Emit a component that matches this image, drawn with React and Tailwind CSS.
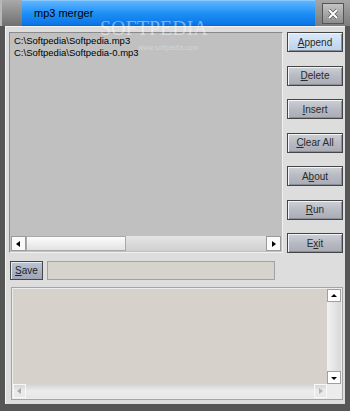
import React from 'react';

const font = { fontFamily: '"Liberation Sans", Arial, sans-serif' };

const Btn = ({ label, u, active }) => {
  const i = label.indexOf(u);
  return (
    <div
      className={`w-[56px] h-[20px] border border-[#454545] flex items-center justify-center text-[10px] text-[#2a2a2a] shadow-[inset_1px_1px_0_#f2f4f8,inset_-1px_-1px_0_#8a8e96] ${
        active ? 'bg-gradient-to-b from-[#dbe9f8] to-[#b9d2ee]' : 'bg-gradient-to-b from-[#cdd0d6] via-[#b7bac2] to-[#a9acb4]'
      }`}
    >
      <span>
        {label.slice(0, i)}
        <span className="underline underline-offset-1">{u}</span>
        {label.slice(i + 1)}
      </span>
    </div>
  );
};

const Tri = ({ dir, color = '#000' }) => {
  const pts = {
    left: '5,1 5,7 1,4',
    right: '2,1 2,7 6,4',
    up: '1,5 7,5 4,2',
    down: '1,3 7,3 4,6',
  }[dir];
  return (
    <svg width="8" height="8" viewBox="0 0 8 8">
      <polygon points={pts} fill={color} />
    </svg>
  );
};

export default function App() {
  return (
    <div className="relative w-[350px] h-[411px] bg-[#565656] overflow-hidden" style={font}>
      {/* title bar */}
      <div className="flex h-[26px]">
        <div className="w-[22px] bg-gradient-to-b from-[#a9a9a9] via-[#8c8c8c] to-[#707070] border-l-2 border-[#b8b8b8]" />
        <div className="w-[293px] h-[25px] bg-gradient-to-b from-[#5cb6ff] via-[#1e90f6] to-[#0c74e6] border-t border-[#8ccaff] flex items-center pl-[12px]">
          <span className="text-[11px] text-black">mp3 merger</span>
        </div>
        <div className="flex-1 bg-gradient-to-b from-[#a6a6a6] to-[#7c7c7c] flex items-start pl-[7px] pt-[3px]">
          <div className="w-[22px] h-[21px] border border-[#555] bg-gradient-to-b from-[#c4c4c4] to-[#8e8e8e] flex items-center justify-center">
            <svg width="12" height="12" viewBox="0 0 12 12">
              <path d="M2 2 L10 10 M10 2 L2 10" stroke="#5a5a5a" strokeWidth="3.4" />
              <path d="M2 2 L10 10 M10 2 L2 10" stroke="#fff" strokeWidth="2" />
            </svg>
          </div>
        </div>
      </div>

      {/* client */}
      <div className="mx-[5px] h-[378px] bg-[#dddddd] border-t border-l border-[#f4f4f4] flex flex-col pt-[5px] pl-[3px]">
        <div className="flex">
          <div className="w-[274px] h-[221px] bg-[#c0c0c0] border border-t-[#8a8a8a] border-l-[#8a8a8a] border-b-[#f0f0f0] border-r-[#f0f0f0] flex flex-col">
            <div className="flex-1 pl-[4px] pt-[2px] text-[9.5px] leading-[11.5px] text-black">
              <div>C:\Softpedia\Softpedia.mp3</div>
              <div>C:\Softpedia\Softpedia-0.mp3</div>
            </div>
            <div className="h-[15px] mx-[1px] mb-[1px] flex bg-[#d6d6d6]">
              <div className="w-[15px] bg-[#fafafa] border border-[#9a9a9a] flex items-center justify-center">
                <Tri dir="left" />
              </div>
              <div className="w-[100px] bg-gradient-to-b from-[#fcfcfc] to-[#e2e2e2] border border-[#a8a8a8]" />
              <div className="flex-1 bg-gradient-to-b from-[#e4e4e4] to-[#d0d0d0]" />
              <div className="w-[15px] bg-[#fafafa] border border-[#9a9a9a] flex items-center justify-center">
                <Tri dir="right" />
              </div>
            </div>
          </div>
          <div className="ml-[4px] flex flex-col gap-[13.5px]">
            <Btn label="Append" u="A" active />
            <Btn label="Delete" u="D" />
            <Btn label="Insert" u="I" />
            <Btn label="Clear All" u="C" />
            <Btn label="About" u="b" />
            <Btn label="Run" u="R" />
            <Btn label="Exit" u="x" />
          </div>
        </div>

        <div className="flex mt-[8px] pl-[1px]">
          <div className="w-[33px] h-[19px] border border-[#454545] bg-gradient-to-b from-[#bcc3d0] to-[#9ea6b6] shadow-[inset_1px_1px_0_#e6eaf2] flex items-center justify-center text-[10px] text-[#222]">
            <span>
              <span className="underline underline-offset-1">S</span>ave
            </span>
          </div>
          <div className="ml-[4px] w-[228px] h-[19px] bg-[#d6d3cd] border border-[#a2a2a2]" />
        </div>

        <div className="mt-[7px] ml-[2px] w-[332px] h-[113px] border border-[#a4a4a4] bg-[#ececec] p-[1px] flex flex-col">
          <div className="flex flex-1">
            <div className="flex-1 bg-[#d6d2cb]" />
            <div className="w-[14px] bg-gradient-to-r from-[#f2f2f2] to-[#d8d8d8] flex flex-col justify-between">
              <div className="h-[13px] bg-white border border-[#a0a0a0] flex items-center justify-center">
                <Tri dir="up" />
              </div>
              <div className="h-[13px] bg-white border border-[#a0a0a0] flex items-center justify-center">
                <Tri dir="down" />
              </div>
            </div>
          </div>
          <div className="h-[14px] flex">
            <div className="flex-1 bg-gradient-to-b from-[#d2d2d2] via-[#ececec] to-[#e6e6e6] flex justify-between">
              <div className="w-[13px] border border-[#f8f8f8] flex items-center justify-center">
                <Tri dir="left" color="#a8a8a8" />
              </div>
              <div className="w-[13px] border border-[#f8f8f8] flex items-center justify-center">
                <Tri dir="right" color="#b4b4b4" />
              </div>
            </div>
            <div className="w-[14px] bg-[#ececec]" />
          </div>
        </div>
      </div>

      {/* watermark */}
      <div
        className="absolute left-[100px] top-[19px] text-[20px] leading-[18px] text-white/45 pointer-events-none"
        style={{ fontFamily: '"Liberation Serif", serif' }}
      >
        SOFTPEDIA<span className="text-[6px] align-top">™</span>
      </div>
      <div className="absolute left-[138px] top-[44px] text-[7px] leading-[8px] text-white/35 pointer-events-none">
        www.softpedia.com
      </div>
    </div>
  );
}
